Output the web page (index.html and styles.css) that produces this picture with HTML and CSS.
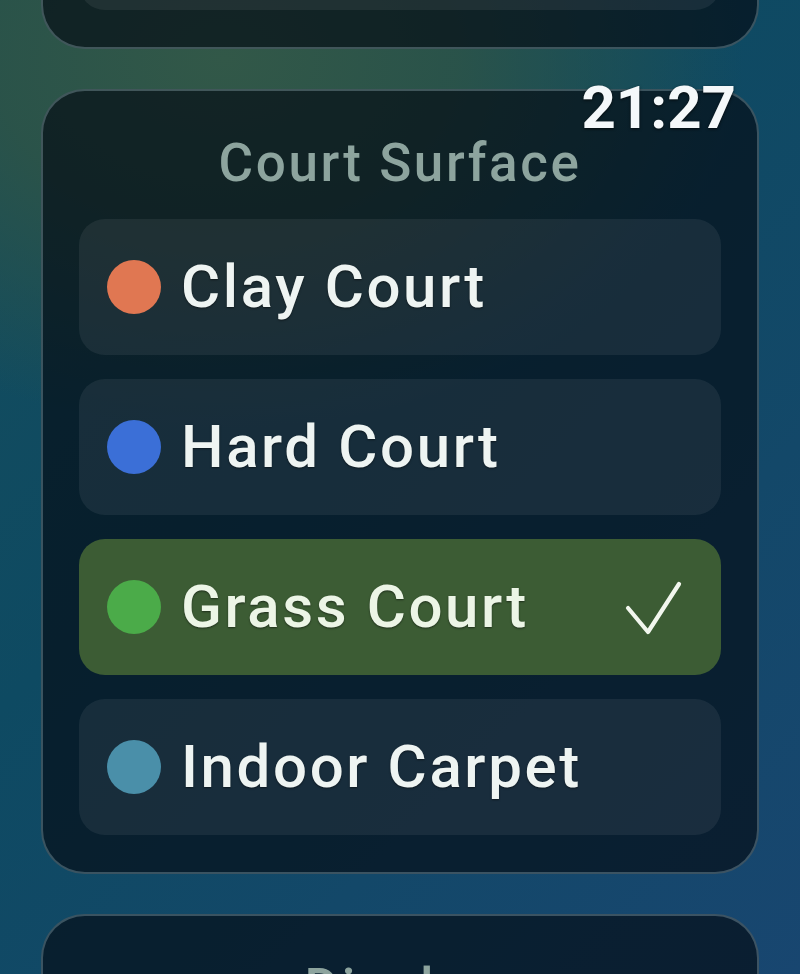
FILE: index.html
```html
<!DOCTYPE html>
<html lang="en">
<head>
<meta charset="utf-8">
<title>Court Surface</title>
<link rel="stylesheet" href="styles.css">
</head>
<body>
<div class="clock">21:27</div>
<main class="page">
  <section class="card card-prev">
    <div class="option"></div>
  </section>

  <section class="card">
    <h2 class="card-title">Court Surface</h2>
    <div class="option"><span class="dot dot-clay"></span><span class="label">Clay Court</span></div>
    <div class="option"><span class="dot dot-hard"></span><span class="label">Hard Court</span></div>
    <div class="option option-selected"><span class="dot dot-grass"></span><span class="label">Grass Court</span>
      <svg class="check" viewBox="0 0 60 56" width="60" height="56" aria-hidden="true"><polyline points="5,27 25,51 56,3" fill="none" stroke="#f2f7ee" stroke-width="4.2" stroke-linecap="round" stroke-linejoin="round"/></svg>
    </div>
    <div class="option"><span class="dot dot-carpet"></span><span class="label">Indoor Carpet</span></div>
  </section>

  <section class="card">
    <h2 class="card-title">Display</h2>
  </section>
</main>
</body>
</html>
```

FILE: styles.css
```css
html, body {
  margin: 0;
  padding: 0;
}

body {
  width: 800px;
  height: 974px;
  overflow: hidden;
  position: relative;
  font-family: Roboto, "Liberation Sans", sans-serif;
  background:
    radial-gradient(ellipse 65% 38% at 28% 6%, rgba(50, 88, 72, 1) 0%, rgba(46, 84, 70, 0.85) 45%, rgba(46, 84, 70, 0) 100%),
    linear-gradient(135deg, #154d5c 0%, #0e4a62 40%, #184670 100%);
}

.page {
  display: flex;
  flex-direction: column;
  gap: 40px;
  margin: -152px 41px 0 41px;
}

.card {
  border: 2px solid rgba(160, 190, 200, 0.33);
  border-radius: 44px;
  background: rgba(4, 12, 20, 0.68);
  padding: 40px 36px 37px 36px;
  display: flex;
  flex-direction: column;
  gap: 24px;
}

.card-prev {
  padding-top: 24px;
}

.card-title {
  margin: 0;
  height: 64px;
  line-height: 64px;
  font-size: 53px;
  font-weight: 500;
  letter-spacing: 2.6px;
  text-align: center;
  color: #8da49e;
}

.option {
  height: 136px;
  border-radius: 26px;
  background: rgba(255, 255, 255, 0.065);
  display: flex;
  align-items: center;
  padding: 0 38px 0 28px;
  gap: 20px;
}

.option-selected {
  background: #3c5c34;
}

.dot {
  flex: 0 0 54px;
  width: 54px;
  height: 54px;
  border-radius: 50%;
}

.dot-clay { background: #e07752; }
.dot-hard { background: #3b6fd7; }
.dot-grass { background: #4bab49; }
.dot-carpet { background: #4a8fa9; }

.label {
  flex: 1;
  font-size: 60px;
  font-weight: 500;
  letter-spacing: 2.6px;
  color: #eef4f2;
  line-height: 70px;
  text-shadow: 0 1px 2px rgba(0, 0, 0, 0.5);
}

.option-selected .label {
  color: #ecf5e6;
}

.check {
  flex: 0 0 60px;
  margin-top: 4px;
}

.clock {
  position: absolute;
  top: 78px;
  right: 64px;
  font-size: 60px;
  line-height: 60px;
  font-weight: 700;
  color: #f4f8fa;
  text-shadow: 0 1px 3px rgba(0, 0, 0, 0.7);
  z-index: 2;
}
```
